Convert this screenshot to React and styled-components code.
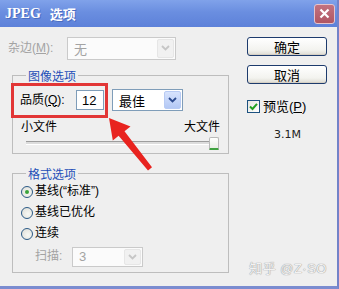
import React from "react";
import styled, { createGlobalStyle } from "styled-components";

const GlobalStyle = createGlobalStyle`
  html, body {
    margin: 0;
    padding: 0;
    background: #efefef;
  }
  body {
    font-family: "Liberation Sans", "Noto Sans CJK SC", sans-serif;
    font-size: 12px;
    color: #000;
  }
`;

const Window = styled.div`
  position: relative;
  width: 339px;
  height: 289px;
  box-sizing: border-box;
  background: #efefef;
  border-right: 2px solid #7383c9;
  border-bottom: 3px solid #7b8cd0;
  display: flex;
  flex-direction: column;
  overflow: hidden;
`;

const TitleBar = styled.div`
  height: 27px;
  flex: none;
  display: flex;
  align-items: center;
  justify-content: space-between;
  padding: 0 2px 0 5px;
  background: linear-gradient(#80a2ea, #6a8ee0 45%, #5d81d9);
  color: #fff;
`;

const Title = styled.div`
  display: flex;
  gap: 9px;
  font-weight: bold;
  font-size: 13px;
  line-height: 15px;
  text-shadow: 1px 1px 0 #4a6cc0;
  span:first-child {
    font-family: "Liberation Serif", serif;
    font-size: 14px;
  }
  span:last-child {
    font-family: "Noto Sans CJK SC", sans-serif;
  }
`;

const CloseButton = styled.div`
  width: 19px;
  height: 18px;
  border: 1px solid #e6c3cb;
  border-radius: 3px;
  background: linear-gradient(#c27280, #b05663);
  display: flex;
  align-items: center;
  justify-content: center;
`;

const Body = styled.div`
  flex: 1;
  display: flex;
  padding: 9px 0 0 8px;
`;

const LeftColumn = styled.div`
  width: 221px;
  display: flex;
  flex-direction: column;
`;

const RightColumn = styled.div`
  margin-left: 18px;
  display: flex;
  flex-direction: column;
`;

const Row = styled.div`
  display: flex;
  align-items: center;
  height: ${(p) => p.h || 22}px;
  margin-top: ${(p) => p.mt || 0}px;
  padding-left: ${(p) => p.pl || 0}px;
`;

const Label = styled.span`
  width: ${(p) => p.w}px;
  flex: none;
  font-size: 12px;
  line-height: 15px;
  color: ${(p) => (p.disabled ? "#a3a3a3" : "#000")};
  white-space: nowrap;
  u {
    text-decoration: underline;
  }
`;

const Group = styled.fieldset`
  margin: ${(p) => p.mt}px 0 0 4px;
  width: 217px;
  box-sizing: border-box;
  border: 1px solid #bdbdbd;
  padding: ${(p) => p.pt}px 8px ${(p) => p.pb}px 7px;
  min-width: 0;
`;

const Legend = styled.legend`
  margin-left: 6px;
  padding: 0 2px;
  font-family: "Noto Sans CJK SC", sans-serif;
  font-size: 12px;
  line-height: 15px;
  color: #1f4fb8;
`;

const SelectBox = styled.div`
  width: ${(p) => p.w}px;
  height: ${(p) => p.h}px;
  box-sizing: border-box;
  margin-left: ${(p) => p.ml || 0}px;
  border: 1px solid ${(p) => (p.disabled ? "#cacaca" : "#7f9db9")};
  background: ${(p) => (p.disabled ? "#fbfbfb" : "#fff")};
  display: flex;
  align-items: stretch;
  padding: 1px;
`;

const SelectText = styled.span`
  flex: 1;
  padding-left: 5px;
  display: flex;
  align-items: center;
  font-size: 13px;
  color: ${(p) => (p.disabled ? "#a3a3a3" : "#000")};
`;

const SelectArrow = styled.span`
  width: 15px;
  flex: none;
  display: flex;
  align-items: center;
  justify-content: center;
  border-radius: 2px;
  border: 1px solid ${(p) => (p.disabled ? "#e6e6e6" : "#b8cbf4")};
  background: ${(p) =>
    p.disabled
      ? "#f1f1f1"
      : "linear-gradient(#d7e3fd, #b3c8f5)"};
`;

const TextInput = styled.div`
  width: 28px;
  height: 20px;
  box-sizing: border-box;
  margin-left: ${(p) => p.ml || 0}px;
  border: 1px solid #7f9db9;
  background: #fff;
  padding-left: 5px;
  display: flex;
  align-items: center;
  font-size: 13px;
`;

const SizeLabels = styled.div`
  margin-top: 9px;
  display: flex;
  justify-content: space-between;
  font-size: 12px;
  line-height: 15px;
  padding-left: 1px;
`;

const Slider = styled.div`
  position: relative;
  height: 12px;
  margin: 2px 1px 0 6px;
  display: flex;
  align-items: center;
`;

const Track = styled.div`
  flex: 1;
  height: 2px;
  margin-right: 5px;
  border-top: 1px solid #9d9d9d;
  border-bottom: 1px solid #fff;
  background: #dcdcdc;
`;

const Thumb = styled.div`
  position: absolute;
  right: 0;
  top: 0;
  width: 8px;
  height: 10px;
  border: 1px solid #b9b9b9;
  border-bottom: 2px solid #3fa33f;
  border-radius: 2px 2px 1px 1px;
  background: linear-gradient(#ffffff, #e9efe4);
`;

const Radio = styled.span`
  width: 12px;
  height: 12px;
  box-sizing: border-box;
  flex: none;
  border-radius: 50%;
  border: 1px solid #2b5a86;
  background: radial-gradient(circle at 60% 60%, #f8f8f4, #dcdcd6);
  margin: 0 2px 0 1px;
  display: flex;
  align-items: center;
  justify-content: center;
  &::after {
    content: "";
    width: 4px;
    height: 4px;
    border-radius: 50%;
    background: ${(p) => (p.checked ? "#3aa33a" : "transparent")};
  }
`;

const Button = styled.div`
  width: 80px;
  height: 19px;
  box-sizing: border-box;
  margin-top: ${(p) => p.mt}px;
  border: 1px solid #1d3b6d;
  border-radius: 3px;
  background: linear-gradient(#ffffff, #f3f3ef 70%, #dcdbd3);
  box-shadow: inset 0 -1px 0 #d6d0c5;
  display: flex;
  align-items: center;
  justify-content: center;
  font-family: "Noto Sans CJK SC", sans-serif;
  font-size: 13px;
  line-height: 15px;
`;

const CheckRow = styled.div`
  margin-top: 15px;
  display: flex;
  align-items: center;
  gap: 3px;
  font-size: 13px;
  line-height: 15px;
  u {
    text-decoration: underline;
  }
`;

const CheckBox = styled.span`
  width: 13px;
  height: 13px;
  box-sizing: border-box;
  border: 1px solid #1c5180;
  background: linear-gradient(135deg, #e6e6e0, #ffffff);
  display: flex;
  align-items: center;
  justify-content: center;
`;

const SizeInfo = styled.div`
  margin-top: 14px;
  padding-left: 27px;
  font-family: "DejaVu Sans", sans-serif;
  font-size: 11px;
  line-height: 14px;
  color: #222;
`;

const Highlight = styled.div`
  position: absolute;
  left: 11px;
  top: 83px;
  width: 97px;
  height: 35px;
  box-sizing: border-box;
  border: 3px solid #e23636;
  pointer-events: none;
`;

const Overlay = styled.svg`
  position: absolute;
  left: 0;
  top: 0;
  pointer-events: none;
`;

const Watermark = styled.div`
  position: absolute;
  right: 10px;
  bottom: 10px;
  font-size: 13px;
  line-height: 15px;
  color: #f2f2f2;
  text-shadow: 0 0 1px #9a9a9a, 0 0 1px #9a9a9a;
  letter-spacing: 0.5px;
`;

function Chevron({ disabled }) {
  return (
    <svg width="9" height="6" viewBox="0 0 9 6">
      <path
        d="M1 1 L4.5 4.5 L8 1"
        fill="none"
        stroke={disabled ? "#c6c6c6" : "#2c4b8f"}
        strokeWidth="1.8"
      />
    </svg>
  );
}

function Select({ value, w, h, ml, disabled }) {
  return (
    <SelectBox w={w} h={h} ml={ml} disabled={disabled}>
      <SelectText disabled={disabled}>{value}</SelectText>
      <SelectArrow disabled={disabled}>
        <Chevron disabled={disabled} />
      </SelectArrow>
    </SelectBox>
  );
}

export default function App() {
  return (
    <Window>
      <GlobalStyle />
      <TitleBar>
        <Title>
          <span>JPEG</span>
          <span>选项</span>
        </Title>
        <CloseButton>
          <svg width="11" height="11" viewBox="0 0 11 11">
            <path d="M1.5 1.5 L9.5 9.5 M9.5 1.5 L1.5 9.5" stroke="#fff" strokeWidth="2.2" />
          </svg>
        </CloseButton>
      </TitleBar>

      <Body>
        <LeftColumn>
          <Row h={24}>
            <Label w={59} disabled>
              杂边(<u>M</u>):
            </Label>
            <Select value="无" w={109} h={23} disabled />
          </Row>

          <Group mt={8} pt={6} pb={4}>
            <Legend>图像选项</Legend>
            <Row h={22}>
              <Label w={56}>
                品质(<u>Q</u>):
              </Label>
              <TextInput>12</TextInput>
              <Select value="最佳" w={71} h={22} ml={8} />
            </Row>
            <SizeLabels>
              <span>小文件</span>
              <span>大文件</span>
            </SizeLabels>
            <Slider>
              <Track />
              <Thumb />
            </Slider>
          </Group>

          <Group mt={12} pt={0} pb={5}>
            <Legend>格式选项</Legend>
            <Row h={21}>
              <Radio checked />
              <Label>基线(“标准”)</Label>
            </Row>
            <Row h={21}>
              <Radio />
              <Label>基线已优化</Label>
            </Row>
            <Row h={21}>
              <Radio />
              <Label>连续</Label>
            </Row>
            <Row h={21} mt={2} pl={15}>
              <Label w={37} disabled>
                扫描:
              </Label>
              <Select value="3" w={71} h={20} disabled />
            </Row>
          </Group>
        </LeftColumn>

        <RightColumn>
          <Button mt={1}>确定</Button>
          <Button mt={9}>取消</Button>
          <CheckRow>
            <CheckBox>
              <svg width="9" height="9" viewBox="0 0 9 9">
                <path d="M1 4.5 L3.5 7 L8 1.8" fill="none" stroke="#21a121" strokeWidth="2" />
              </svg>
            </CheckBox>
            <span>
              预览(<u>P</u>)
            </span>
          </CheckRow>
          <SizeInfo>3.1M</SizeInfo>
        </RightColumn>
      </Body>

      <Highlight />
      <Overlay width="339" height="289" viewBox="0 0 339 289">
        <polygon
          points="109,118 130.5,126.5 124.5,131.2 152,167.2 148,170.6 118.6,135.8 112.8,140.6"
          fill="#e8231f"
        />
      </Overlay>
      <Watermark>知乎 @Z·SO</Watermark>
    </Window>
  );
}
